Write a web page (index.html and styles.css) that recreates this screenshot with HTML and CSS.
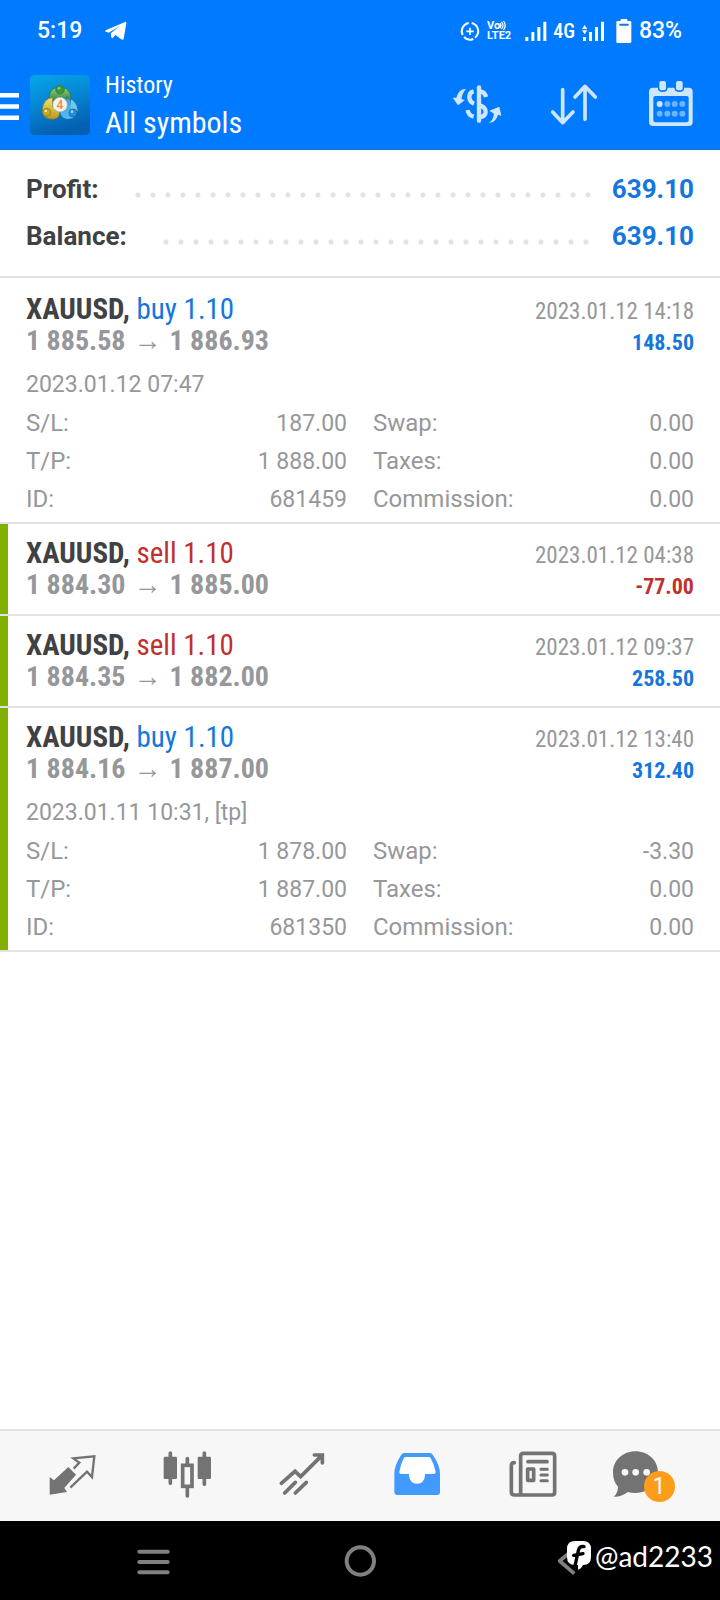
FILE: index.html
```html
<!DOCTYPE html>
<html lang="en">
<head>
<meta charset="utf-8">
<meta name="viewport" content="width=device-width, initial-scale=1">
<title>History</title>
<link rel="stylesheet" href="styles.css">
</head>
<body>
<div class="screen">
  <div class="statusbar">
    <span class="clock">5:19</span>
    <svg class="telegram" viewBox="314 64 66 60" aria-hidden="true"><path d="M316 92L374 67Q379 65 378 71L370 117Q368 122 363 119L345 106L337 115Q334 118 333 112L331 101L358 79L325 99L316 96Q313 94 316 92Z" fill="currentColor"/></svg>
    <div class="indicators">
      <svg class="ind-data" viewBox="61 58 60 60" aria-hidden="true"><g fill="none" stroke="currentColor"><path stroke-width="6" d="M96 64A25 25 0 0 1 106 108M101 112A25 25 0 0 1 73 106M69 100A25 25 0 0 1 87 64"/><path stroke-width="5" d="M91 78V100M80 89H102"/></g></svg>
      <span class="volte"><span class="volte-row">Vo<svg class="waves" viewBox="0 0 8 9" aria-hidden="true"><path d="M0 2Q2 4.500 0 7M1.500 1Q4.500 4.500 1.500 8M3.500 0Q7 4.500 3.500 9" fill="none" stroke="currentColor" stroke-width="1.200"/></svg></span><span class="volte-row">LTE2</span></span>
      <svg class="ind-signal" viewBox="254 58 66 60" aria-hidden="true"><path fill="currentColor" d="M255 106h9v12h-9zM273 91h9v27h-9zM291 76h9v42h-9zM309 60h9v58h-9z"/></svg>
      <span class="network">4G</span>
      <svg class="ind-signal" viewBox="426 58 66 60" aria-hidden="true"><path fill="currentColor" d="M429 106h9v12h-9zM447 91h9v27h-9zM465 76h9v42h-9zM483 60h9v58h-9zM426 82l8-12 8 12zM426 86l8 12 8-12z"/></svg>
      <svg class="ind-battery" viewBox="527 54 48 72" aria-hidden="true"><path fill="currentColor" fill-rule="evenodd" d="M541 54h20v6h8q4 0 4 4v58q0 4-4 4h-37q-4 0-4-4v-58q0-4 4-4h9zM537 68v6h28v-6z"/></svg>
      <span class="charge">83%</span>
    </div>
  </div>

  <header class="appbar">
    <button class="menu" type="button" aria-label="Menu"><svg viewBox="0 0 19 28" aria-hidden="true"><path d="M0 4.300H19M0 15.500H19M0 26.700H19" stroke="currentColor" stroke-width="4.600"/></svg></button>
    <svg class="logo" viewBox="90 225 180 180" aria-hidden="true">
      <defs>
        <linearGradient id="tile" x1="0" y1="0" x2="0.300" y2="1"><stop offset="0" stop-color="#06a6e6"/><stop offset="0.500" stop-color="#0686d6"/><stop offset="1" stop-color="#0560b2"/></linearGradient>
        <linearGradient id="grn" x1="0" y1="0" x2="0" y2="1"><stop offset="0" stop-color="#8ed07a"/><stop offset="1" stop-color="#2f8438"/></linearGradient>
        <linearGradient id="yel" x1="0" y1="0" x2="0" y2="1"><stop offset="0" stop-color="#f0e070"/><stop offset="1" stop-color="#bd9a18"/></linearGradient>
        <linearGradient id="blu" x1="0" y1="0" x2="0" y2="1"><stop offset="0" stop-color="#3d9fe0"/><stop offset="1" stop-color="#55bdf2"/></linearGradient>
      </defs>
      <rect x="90" y="225" width="180" height="180" rx="14" fill="url(#tile)"/>
      <path d="M147 300Q146 270 166 264Q180 276 195 264Q214 273 214 304Q195 294 180 300Z" fill="url(#grn)" stroke="#256b4a" stroke-width="2"/>
      <path d="M158 292Q130 297 127 326Q124 358 161 358Q181 354 179 334L158 320Z" fill="url(#yel)" stroke="#6c7332" stroke-width="2"/>
      <path d="M202 290L213 303Q211 325 222 329L233 336Q228 359 199 358Q181 352 179 335Z" fill="url(#blu)" stroke="#0861a1" stroke-width="2"/>
      <path d="M213 298Q232 309 233 334L211 325Z" fill="#71c7ec"/>
      <circle cx="180" cy="269" r="13" fill="#3f963c" stroke="#27703f" stroke-width="2"/><circle cx="177" cy="265" r="4" fill="#92cc7c"/>
      <circle cx="140" cy="337" r="12" fill="#c7a723" stroke="#776c2b" stroke-width="2"/><circle cx="137" cy="333" r="4" fill="#f4e896"/>
      <circle cx="219" cy="339" r="12" fill="#278dd4" stroke="#0b5d9f" stroke-width="2"/><circle cx="216" cy="335" r="4" fill="#9adaf5"/>
      <circle cx="180" cy="314" r="22" fill="#f5f1ec" stroke="#9aafa5" stroke-width="2"/>
      <text class="logo-digit" x="180" y="327" text-anchor="middle">4</text>
    </svg>
    <div class="titles"><span class="section">History</span><h1 class="filter">All symbols</h1></div>
    <div class="actions">
      <button class="action" type="button" aria-label="Symbol"><svg viewBox="39 243 144 144" aria-hidden="true"><path d="M117 262V362" stroke="currentColor" stroke-width="13" stroke-linecap="round"/><g fill="none" stroke="currentColor" stroke-width="13"><path d="M101 274Q87 277 88 293Q89 306 102 311"/><path d="M83 330Q85 346 101 350"/><path d="M121 274Q135 276 138 291"/><path d="M121 317Q137 322 137 336Q136 349 121 351"/></g><path fill="currentColor" d="M78 267Q57 265 49 293L38 293L54 316L75 300L65 298Q65 281 78 267ZM147 369Q161 358 162 341L148 332L178 320L184 347L174 344Q168 367 147 369Z"/></svg></button>
      <button class="action" type="button" aria-label="Sort"><svg viewBox="330 243 144 144" aria-hidden="true"><path d="M368 269V367M338 336L368 368L399 336M435 358V260M405 291L435 259L466 291" fill="none" stroke="currentColor" stroke-width="11" stroke-linecap="round" stroke-linejoin="round"/></svg></button>
      <button class="action" type="button" aria-label="Period"><svg viewBox="621 243 144 144" aria-hidden="true"><path fill="currentColor" fill-rule="evenodd" d="M639 263H654V266Q656 275 668 275Q680 275 682 266V263H704V266Q706 275 718 275Q730 275 732 266V263H746Q758 263 758 275V366Q758 378 746 378H639Q627 378 627 366V275Q627 263 639 263ZM646 288Q640 288 640 294V361Q640 367 646 367H740Q746 367 746 361V294Q746 288 740 288Z"/><g fill="currentColor" stroke="#007aff" stroke-width="4"><rect x="656" y="241" width="24" height="32" rx="8"/><rect x="706" y="241" width="24" height="32" rx="8"/></g><circle cx="659" cy="312" r="9" fill="currentColor"/><g fill="#6cb4ff"><circle cx="682" cy="312" r="9"/><circle cx="704" cy="312" r="9"/><circle cx="727" cy="312" r="9"/><circle cx="659" cy="341" r="9"/><circle cx="682" cy="341" r="9"/><circle cx="704" cy="341" r="9"/><circle cx="727" cy="341" r="9"/></g></svg></button>
    </div>
  </header>

  <main class="content">
    <dl class="summary">
      <div class="summary-row"><dt>Profit:</dt><dd>639.10</dd></div>
      <div class="summary-row"><dt>Balance:</dt><dd>639.10</dd></div>
    </dl>

    <article class="trade trade-open">
      <div class="trade-line"><h2 class="symbol">XAUUSD, <span class="buy">buy 1.10</span></h2><time class="closed">2023.01.12 14:18</time></div>
      <div class="trade-line"><span class="prices">1 885.58<span class="arrow">→</span>1 886.93</span><span class="result gain">148.50</span></div>
      <p class="opened">2023.01.12 07:47</p>
      <dl class="details">
        <div class="detail"><dt>S/L:</dt><dd>187.00</dd></div><div class="detail"><dt>Swap:</dt><dd>0.00</dd></div>
        <div class="detail"><dt>T/P:</dt><dd>1 888.00</dd></div><div class="detail"><dt>Taxes:</dt><dd>0.00</dd></div>
        <div class="detail"><dt>ID:</dt><dd>681459</dd></div><div class="detail"><dt>Commission:</dt><dd>0.00</dd></div>
      </dl>
    </article>

    <article class="trade trade-marked">
      <div class="trade-line"><h2 class="symbol">XAUUSD, <span class="sell">sell 1.10</span></h2><time class="closed">2023.01.12 04:38</time></div>
      <div class="trade-line"><span class="prices">1 884.30<span class="arrow">→</span>1 885.00</span><span class="result loss">-77.00</span></div>
    </article>

    <article class="trade trade-marked">
      <div class="trade-line"><h2 class="symbol">XAUUSD, <span class="sell">sell 1.10</span></h2><time class="closed">2023.01.12 09:37</time></div>
      <div class="trade-line"><span class="prices">1 884.35<span class="arrow">→</span>1 882.00</span><span class="result gain">258.50</span></div>
    </article>

    <article class="trade trade-marked trade-open">
      <div class="trade-line"><h2 class="symbol">XAUUSD, <span class="buy">buy 1.10</span></h2><time class="closed">2023.01.12 13:40</time></div>
      <div class="trade-line"><span class="prices">1 884.16<span class="arrow">→</span>1 887.00</span><span class="result gain">312.40</span></div>
      <p class="opened">2023.01.11 10:31, [tp]</p>
      <dl class="details">
        <div class="detail"><dt>S/L:</dt><dd>1 878.00</dd></div><div class="detail"><dt>Swap:</dt><dd>-3.30</dd></div>
        <div class="detail"><dt>T/P:</dt><dd>1 887.00</dd></div><div class="detail"><dt>Taxes:</dt><dd>0.00</dd></div>
        <div class="detail"><dt>ID:</dt><dd>681350</dd></div><div class="detail"><dt>Commission:</dt><dd>0.00</dd></div>
      </dl>
    </article>
  </main>

  <nav class="tabs" aria-label="Sections">
    <button class="tab" type="button" aria-label="Quotes"><svg viewBox="145 96 144 144" aria-hidden="true"><path fill="currentColor" d="M206 141L229 164L194 204L202 216L150 224V171L163 181Z"/><path d="M222 146L239 128L221 115L284 109L277 171L262 155L212 203" fill="none" stroke="currentColor" stroke-width="7"/></svg></button>
    <button class="tab" type="button" aria-label="Charts"><svg viewBox="490 96 144 144" aria-hidden="true"><g fill="currentColor"><rect x="492" y="110" width="40" height="67" rx="4"/><rect x="594" y="110" width="40" height="67" rx="4"/></g><g fill="none" stroke="currentColor" stroke-width="11" stroke-linecap="round"><path d="M512 99V190M614 99V193M563 116V133M563 205V228"/><rect x="549" y="136" width="28" height="63"/></g></svg></button>
    <button class="tab" type="button" aria-label="Trade"><svg viewBox="115 96 144 144" aria-hidden="true"><path d="M125 190L166 154L183 170L247 106M224 105H248V129M135 219L167 187M167 219L200 187" fill="none" stroke="currentColor" stroke-width="11" stroke-linecap="round" stroke-linejoin="miter"/></svg></button>
    <button class="tab tab-active" type="button" aria-label="History" aria-current="page"><svg viewBox="460 96 144 144" aria-hidden="true"><path fill="currentColor" d="M494 99H570Q577 99 580 106Q601 136 601 162V216Q601 225 592 225H473Q464 225 464 216V162Q464 136 484 106Q487 99 494 99Z"/><path fill="#fff" d="M500 111H566Q571 111 573 115Q583 132 588 155Q588 162 582 162H556V168Q553 191 532 191Q511 191 508 168V162H484Q478 162 479 155Q483 132 492 115Q495 111 500 111Z"/></svg></button>
    <button class="tab" type="button" aria-label="News"><svg viewBox="85 96 144 144" aria-hidden="true"><g fill="none" stroke="currentColor" stroke-width="11" stroke-linecap="round" stroke-linejoin="round"><path d="M104 128Q95 128 95 137V216Q95 225 104 225H217Q225 225 225 217V108Q225 100 217 100H131Q123 100 123 108V221"/><path d="M145 125H202"/><path d="M184 148H203M184 165H203M184 182H203" stroke-width="9"/><rect x="144" y="147" width="18" height="34"/></g></svg></button>
    <button class="tab" type="button" aria-label="Messages"><span class="messages"><svg viewBox="397 96 210 144" aria-hidden="true"><path fill="currentColor" d="M467 94C505 94 535 121 535 157C535 194 505 219 467 219Q455 219 444 216Q426 231 402 230Q415 219 415 200C405 190 400 175 400 157C400 121 430 94 467 94Z"/><g fill="#f7f7f7"><circle cx="436" cy="157" r="10"/><circle cx="468" cy="157" r="10"/><circle cx="501" cy="157" r="10"/></g></svg><span class="badge">1</span></span></button>
  </nav>

  <div class="sysnav">
    <button class="syskey" type="button" aria-label="Recent apps"><svg viewBox="387 349 144 144" aria-hidden="true"><path d="M418 393H503M418 424H503M418 455H503" stroke="currentColor" stroke-width="12" stroke-linecap="round"/></svg></button>
    <button class="syskey" type="button" aria-label="Home"><svg viewBox="288 349 144 144" aria-hidden="true"><circle cx="361" cy="421" r="41" fill="none" stroke="currentColor" stroke-width="12"/></svg></button>
    <button class="syskey" type="button" aria-label="Back"><svg viewBox="189 349 144 144" aria-hidden="true"><path d="M283 384L239 421L283 459" fill="none" stroke="currentColor" stroke-width="11" stroke-linejoin="round"/></svg></button>
    <div class="credit"><svg viewBox="261 372 72 90" aria-hidden="true"><path fill="#fff" d="M285 372H309Q333 372 333 396V420Q333 444 309 444Q303 456 294 458V444H285Q261 444 261 420V396Q261 372 285 372Z"/><path d="M312 389Q298 386 295 401L284 451M281 415L309 410" fill="none" stroke="#000" stroke-width="10" stroke-linecap="round"/></svg><span>@ad2233</span></div>
  </div>
</div>
</body>
</html>
```
FILE: styles.css
```css
* { box-sizing: border-box; }

body {
  margin: 0;
  background: #fff;
  color: #404144;
  font-family: Roboto, "Noto Sans", sans-serif;
  font-size: 24px;
}

button {
  display: flex;
  align-items: center;
  justify-content: center;
  padding: 0;
  border: 0;
  background: none;
  color: inherit;
  font: inherit;
}

svg { display: block; flex: none; overflow: visible; }
h1, h2, p, dl, dd { margin: 0; font-weight: 400; }

.screen { display: flex; flex-direction: column; min-height: 100vh; }

/* Status bar */
.statusbar {
  display: flex;
  align-items: center;
  height: 60px;
  padding: 1px 38px 0 37px;
  background: #007aff;
  color: #fff;
  font-size: 23px;
  font-weight: 500;
}
.telegram { width: 22px; height: 20px; margin-left: 23px; }
.indicators { display: flex; align-items: center; margin-left: auto; }
.ind-data { width: 20px; height: 20px; }
.volte { display: flex; flex-direction: column; margin: 0 14px 0 7px; font-size: 11px; font-weight: 700; line-height: 10px; }
.volte-row { display: flex; }
.waves { width: 8px; height: 9px; }
.ind-signal { width: 22px; height: 20px; }
.network { margin: 0 7px 0 6px; font-family: "Roboto Condensed", Roboto, sans-serif; font-size: 20px; }
.ind-battery { width: 16px; height: 24px; margin: 0 7px 0 12px; }

/* App bar */
.appbar {
  display: flex;
  align-items: center;
  height: 90px;
  padding-right: 25px;
  border-bottom: 1px solid #1d6fc4;
  background: #007aff;
  color: #fff;
  font-family: "Roboto Condensed", "Liberation Sans Narrow", sans-serif;
}
.menu svg { width: 19px; height: 28px; }
.logo { width: 60px; height: 60px; margin: 0 15px 0 11px; }
.logo-digit { fill: #f08a3c; font-family: Roboto, sans-serif; font-size: 36px; font-weight: 500; }
.titles { align-self: flex-start; display: flex; flex-direction: column; padding-top: 9px; }
.section { line-height: 32px; }
.filter { font-size: 30px; line-height: 44px; }
.actions { display: flex; gap: 49px; margin-left: auto; color: #cfe6ff; }
.action svg { width: 48px; height: 48px; }

/* Totals */
.content { flex: 1; }
.summary { margin-bottom: 2px; padding: 16px 26px; border-bottom: 2px solid #e2e2e2; }
.summary-row {
  display: flex;
  font-size: 26px;
  font-weight: 700;
  line-height: 47px;
}
.summary-row::before {
  content: "";
  order: 1;
  flex: 1;
  margin: 0 20px 0 36px;
  background: radial-gradient(circle at 3px 29px, #e2e2e2 2px, transparent 3px) 0 0 / 15px 47px repeat-x;
}
.summary-row dd { order: 2; color: #1476de; font-weight: 700; }

/* Trades */
.trade { padding: 13px 26px; border-bottom: 2px solid #e2e2e2; }
.trade-marked { box-shadow: inset 8px 0 #80b000; }
.trade-open { padding-bottom: 4px; }
.trade-line {
  display: flex;
  justify-content: space-between;
  align-items: baseline;
  height: 32px;
  font-family: "Roboto Condensed", "Liberation Sans Narrow", sans-serif;
  line-height: 32px;
}
.symbol { font-size: 29px; font-weight: 700; }
.symbol span { font-weight: 400; }
.prices { color: #96979b; font-size: 28px; font-weight: 700; }
.arrow { margin: 0 8px; font-family: "Liberation Sans", sans-serif; line-height: 1; }
.closed { color: #96979b; font-size: 23px; }
.result { font-size: 22px; font-weight: 700; }
.buy, .gain { color: #1476de; }
.sell, .loss { color: #c0302c; }
.opened { margin-top: 9px; color: #96979b; font-size: 23px; line-height: 38px; }
.details { display: grid; grid-template-columns: 1fr 1fr; column-gap: 26px; color: #96979b; line-height: 38px; }
.detail { display: flex; justify-content: space-between; align-items: baseline; height: 38px; }
.detail dd { font-size: 23px; }

/* Section tabs */
.tabs {
  display: grid;
  grid-template-columns: repeat(6, 1fr);
  height: 92px;
  padding: 0 16px 0 14px;
  border-top: 2px solid #e2e2e2;
  background: #f7f7f7;
  color: #737373;
}
.tab svg { width: 48px; height: 48px; }
.tab-active { color: #429aff; }
.messages { position: relative; }
.tab .messages svg { width: 70px; }
.badge {
  position: absolute;
  left: 32px;
  top: 19px;
  width: 31px;
  height: 31px;
  border-radius: 50%;
  background: #ff9c1a;
  color: #fff;
  font-size: 23px;
  line-height: 31px;
  text-align: center;
}

/* System navigation */
.sysnav {
  position: relative;
  display: grid;
  grid-template-columns: repeat(3, 1fr);
  height: 79px;
  padding: 0 49px;
  background: #000;
  color: #808080;
}
.syskey svg { width: 48px; height: 48px; }
.credit {
  position: absolute;
  right: 7px;
  top: 16px;
  display: flex;
  align-items: center;
  gap: 4px;
  color: #fff;
  font-family: Lato, sans-serif;
  font-size: 28px;
  line-height: 38px;
}
.credit svg { width: 24px; height: 30px; }
```
